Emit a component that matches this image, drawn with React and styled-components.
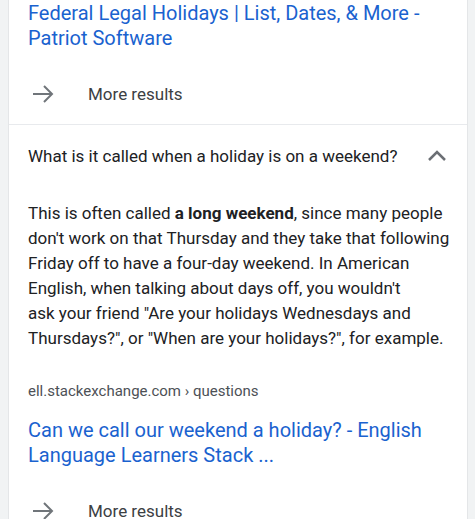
import styled, { createGlobalStyle } from "styled-components";

const GlobalStyle = createGlobalStyle`
    body {
        margin: 0;
        background: #f1f3f4;
        font-family: Roboto, "Liberation Sans", Arial, sans-serif;
    }
`;

const Page = styled.div`
    padding: 0 7px 0 8px;
    height: 519px;
    overflow: hidden;
`;

const Card = styled.div`
    background: #fff;
    padding-top: 1px;
    border-left: 1px solid #e4e6e8;
    border-right: 1px solid #e4e6e8;
`;

const Section = styled.div`
    padding: 0 20px 0 19px;
    border-bottom: ${props => (props.divider ? "1px solid #e8eaed" : "none")};
`;

const TitleLink = styled.a`
    display: block;
    color: #1a62cf;
    font-size: 20px;
    line-height: 25px;
    text-decoration: none;
`;

const MoreRow = styled.div`
    display: flex;
    align-items: center;
    height: 24px;
    margin-top: 31px;
    padding-bottom: 18px;
    font-size: 17px;
    color: #3c4043;
`;

const ArrowBox = styled.div`
    width: 55px;
    display: flex;
    align-items: center;
    padding-left: 5px;
`;

const QuestionRow = styled.div`
    display: flex;
    justify-content: space-between;
    align-items: center;
    height: 24px;
    padding-top: 19px;
    font-size: 17px;
    color: #202124;
`;

const Answer = styled.p`
    margin: 33px 0 0;
    font-size: 17px;
    line-height: 25px;
    color: #202124;
    white-space: nowrap;

    b {
        font-weight: 700;
    }
`;

const Source = styled.div`
    margin-top: 30px;
    margin-bottom: 17px;
    font-size: 15px;
    line-height: 20px;
    color: #4d5156;
`;

function Arrow() {
    return (
        <svg width="24" height="20" viewBox="0 0 24 20">
            <path d="M0 10h19M11 2l8 8-8 8" fill="none" stroke="#70757a" strokeWidth="2" />
        </svg>
    );
}

function Chevron() {
    return (
        <svg width="20" height="12" viewBox="0 0 20 12">
            <path d="M2 10l8-8 8 8" fill="none" stroke="#6b6f74" strokeWidth="2.5" />
        </svg>
    );
}

function More() {
    return (
        <MoreRow>
            <ArrowBox><Arrow /></ArrowBox>
            More results
        </MoreRow>
    );
}

export default function App() {
    return (
        <Page>
            <GlobalStyle />
            <Card>
                <Section divider>
                    <TitleLink href="#">
                        Federal Legal Holidays | List, Dates, &amp; More -<br />
                        Patriot Software
                    </TitleLink>
                    <More />
                </Section>
                <Section>
                    <QuestionRow>
                        What is it called when a holiday is on a weekend?
                        <Chevron />
                    </QuestionRow>
                    <Answer>
                        This is often called <b>a long weekend</b>, since many people<br />
                        don't work on that Thursday and they take that following<br />
                        Friday off to have a four-day weekend. In American<br />
                        English, when talking about days off, you wouldn't<br />
                        ask your friend "Are your holidays Wednesdays and<br />
                        Thursdays?", or "When are your holidays?", for example.
                    </Answer>
                    <Source>ell.stackexchange.com › questions</Source>
                    <TitleLink href="#">
                        Can we call our weekend a holiday? - English<br />
                        Language Learners Stack ...
                    </TitleLink>
                    <More />
                </Section>
            </Card>
        </Page>
    );
}
